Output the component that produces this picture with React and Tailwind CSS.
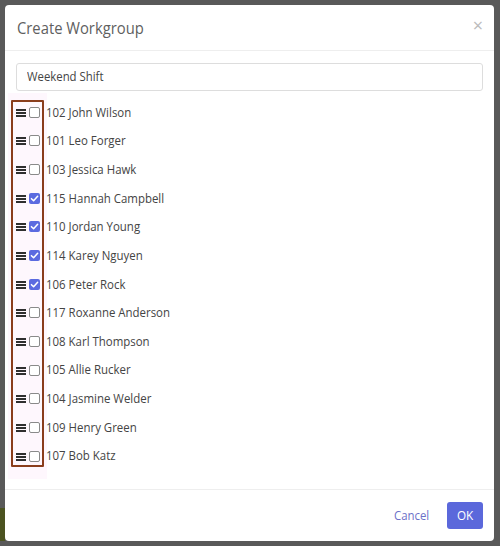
import React from "react";

const people = [
  ["102 John Wilson", false],
  ["101 Leo Forger", false],
  ["103 Jessica Hawk", false],
  ["115 Hannah Campbell", true],
  ["110 Jordan Young", true],
  ["114 Karey Nguyen", true],
  ["106 Peter Rock", true],
  ["117 Roxanne Anderson", false],
  ["108 Karl Thompson", false],
  ["105 Allie Rucker", false],
  ["104 Jasmine Welder", false],
  ["109 Henry Green", false],
  ["107 Bob Katz", false],
];

function Bars() {
  return (
    <div className="flex flex-col gap-[1px] w-[10px]">
      <div className="h-[2px] bg-[#2f2f2f]" />
      <div className="h-[2px] bg-[#2f2f2f]" />
      <div className="h-[2px] bg-[#2f2f2f]" />
    </div>
  );
}

function Box({ checked }) {
  if (checked) {
    return (
      <div className="w-[11px] h-[11px] rounded-[2px] bg-[#5b6ae0] flex items-center justify-center">
        <svg width="9" height="9" viewBox="0 0 10 10">
          <path d="M1.6 5.2 L4 7.5 L8.5 2.5" fill="none" stroke="white" strokeWidth="1.7" strokeLinecap="round" strokeLinejoin="round" />
        </svg>
      </div>
    );
  }
  return <div className="w-[11px] h-[11px] rounded-[2px] border border-[#8a8a8a] bg-white" />;
}

export default function App() {
  return (
    <div className="w-[500px] h-[546px] bg-[#595959] pt-[5px] pl-[5px] relative overflow-hidden" style={{ fontFamily: '"Open Sans", sans-serif' }}>
      <div className="absolute left-0 top-[508px] w-[5px] h-[33px] bg-[#4b5320]" />
      <div className="relative w-[489px] h-[536px] bg-white rounded-[4px] flex flex-col">
        <div className="h-[46px] border-b border-[#eeeeee] flex items-center justify-between pl-[12px] pr-[11px]">
          <span className="inline-block origin-left scale-x-[0.87] text-[17px] text-[#5f5f5f] whitespace-nowrap">Create Workgroup</span>
          <span className="text-[#bbbbbb] text-[18px] leading-none -mt-[5px]">×</span>
        </div>
        <div className="flex-1 px-[11px] pt-[12px]">
          <div className="h-[28px] border border-[#dddddd] rounded-[3px] flex items-center pl-[10px] text-[13px] text-[#444]">
            <span className="inline-block origin-left scale-x-[0.875] whitespace-nowrap">Weekend Shift</span>
          </div>
          <div className="relative mt-[7px]">
            <div className="absolute left-[-8px] top-[-5px] w-[39px] h-[386px] bg-[#fef7fd]" />
            <div className="absolute left-[-5px] top-[2px] w-[33px] h-[367px] border-2 border-[#8a3d1c] rounded-[1px]" />
            {people.map(([name, checked]) => (
              <div key={name} className="relative h-[28.67px] flex items-center">
                <div className="mt-[1px]">
                  <Bars />
                </div>
                <div className="ml-[3px]">
                  <Box checked={checked} />
                </div>
                <span className="ml-[6px] inline-block origin-left scale-x-[0.88] whitespace-nowrap text-[13px] text-[#444]">{name}</span>
              </div>
            ))}
          </div>
        </div>
        <div className="h-[52px] border-t border-[#eeeeee] flex items-center justify-end pr-[11px] gap-[18px]">
          <span className="inline-block origin-right scale-x-[0.875] text-[13px] text-[#6b70c8]">Cancel</span>
          <div className="w-[36px] h-[27px] rounded-[3px] bg-[#5b68db] text-white text-[13px] flex items-center justify-center">
            <span className="inline-block scale-x-[0.9]">OK</span>
          </div>
        </div>
      </div>
    </div>
  );
}
